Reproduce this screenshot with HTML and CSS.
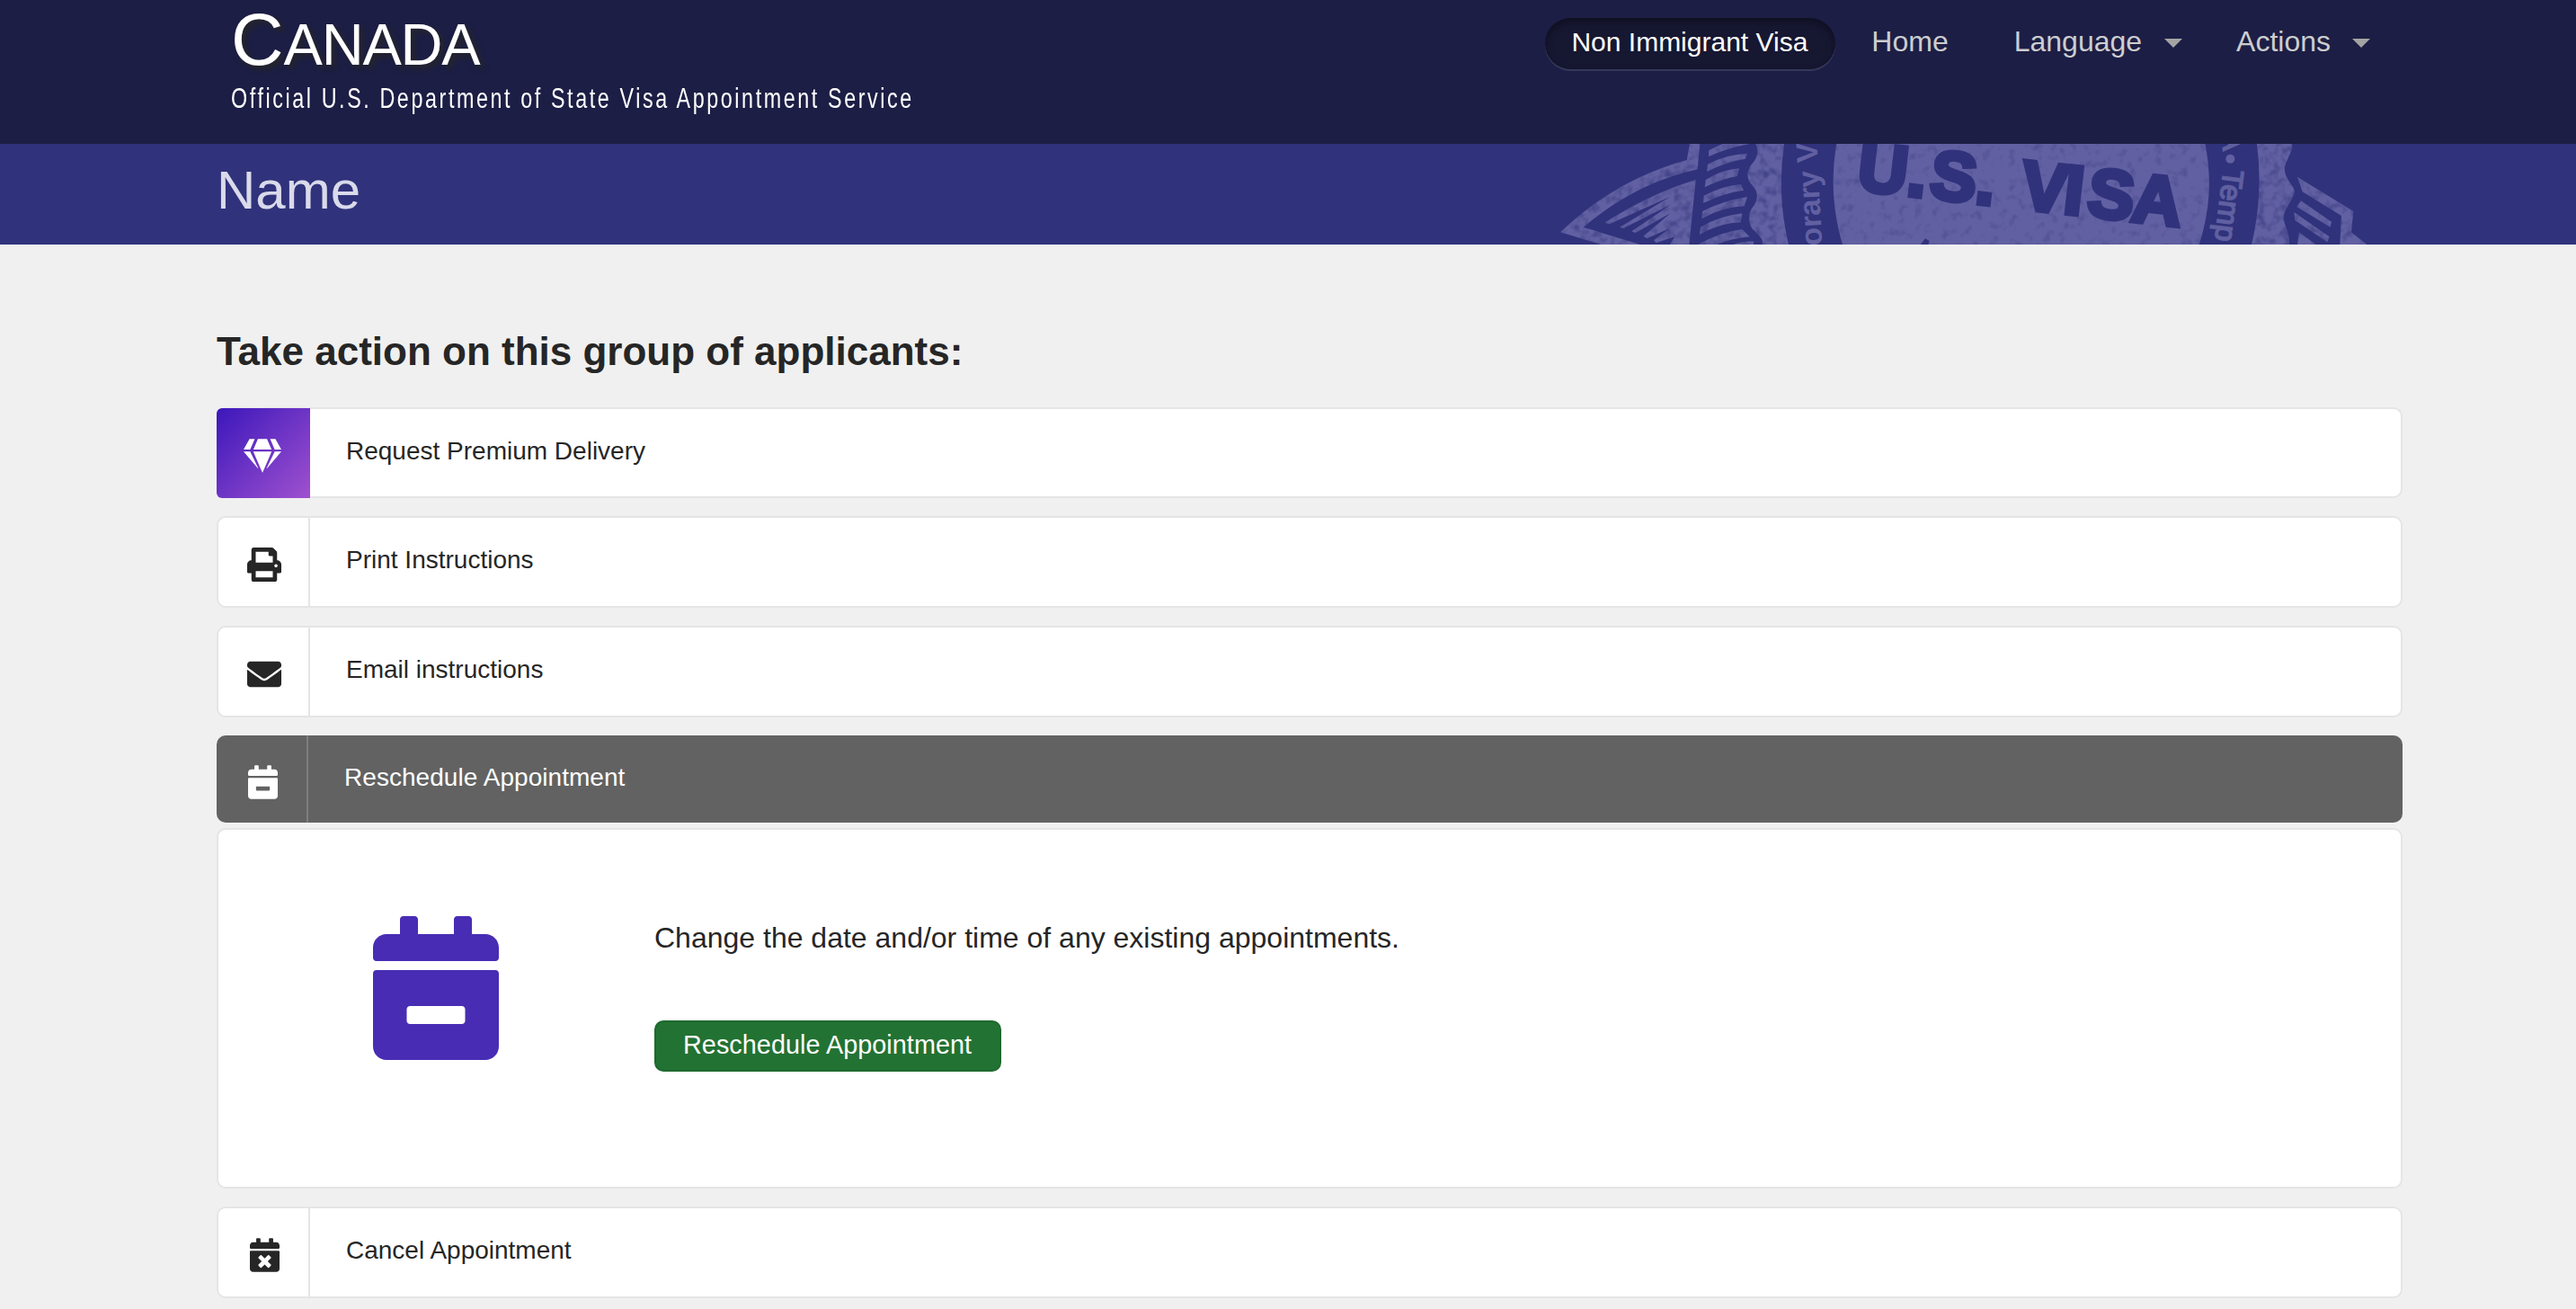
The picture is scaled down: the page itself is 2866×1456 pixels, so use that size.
FILE: index.html
```html
<!DOCTYPE html>
<html lang="en">
<head>
<meta charset="utf-8">
<title>Canada - Visa Appointment Service</title>
<link rel="stylesheet" href="styles.css">
</head>
<body>
<header class="topbar">
  <div class="brand">
    <div class="brand-name">C<span class="brand-small">ANADA</span></div>
    <div class="brand-tag">Official U.S. Department of State Visa Appointment Service</div>
  </div>
  <nav class="nav">
    <a class="nav-pill">Non Immigrant Visa</a>
    <a class="nav-link nav-home">Home</a>
    <a class="nav-link nav-menu nav-language">Language<span class="caret"></span></a>
    <a class="nav-link nav-menu nav-actions">Actions<span class="caret"></span></a>
  </nav>
</header>

<section class="band">
  <h1 class="band-title">Name</h1>
  <svg class="seal" viewBox="0 30 2820 336" preserveAspectRatio="none" aria-hidden="true">
    <defs>
      <filter id="grain" x="0" y="0" width="100%" height="100%" color-interpolation-filters="sRGB">
        <feTurbulence type="fractalNoise" baseFrequency="0.035" numOctaves="2" seed="4" result="n"/>
        <feColorMatrix in="n" type="matrix" values="0 0 0 0 0.188  0 0 0 0 0.196  0 0 0 0 0.482  1.5 0 0 0 -0.66" result="spots"/>
        <feComposite in="spots" in2="SourceGraphic" operator="in" result="s"/>
        <feMerge><feMergeNode in="SourceGraphic"/><feMergeNode in="s"/></feMerge>
      </filter>
      <filter id="soft-grain" x="0" y="0" width="100%" height="100%" color-interpolation-filters="sRGB">
        <feTurbulence type="fractalNoise" baseFrequency="0.035" numOctaves="2" seed="9" result="n"/>
        <feColorMatrix in="n" type="matrix" values="0 0 0 0 0.188  0 0 0 0 0.196  0 0 0 0 0.482  1 0 0 0 -0.54" result="spots"/>
        <feComposite in="spots" in2="SourceGraphic" operator="in" result="s"/>
        <feMerge><feMergeNode in="SourceGraphic"/><feMergeNode in="s"/></feMerge>
      </filter>
    </defs>
    <g class="seal-light" filter="url(#grain)">
      <path d="M48 325Q230 150 470 84L480 30H514L506 115Q300 160 125 308L315 366H185Z"/>
      <path d="M500 150Q350 195 196 293L212 298 415 206 246 308 258 312 418 232 286 322 298 327 415 262 325 338 338 345 412 313 360 352 368 360 430 340 414 366H478Z"/>
      <path d="M543 52Q570 38 590 30H680Q600 45 543 73Z"/>
      <path d="M540 98Q600 65 672 62L665 80Q600 90 537 123Z"/>
      <path d="M533 150Q590 115 645 112L638 138Q590 145 530 175Z"/>
      <path d="M527 203Q590 170 650 165L660 185Q600 192 525 228Z"/>
      <path d="M522 255Q590 220 672 207L662 238Q590 240 520 280Z"/>
      <path d="M516 308Q580 270 655 262L650 292Q580 295 513 332Z"/>
      <path d="M508 366Q580 325 655 315L680 340Q620 345 570 366Z"/>
      <path d="M625 366Q660 355 693 355V366Z"/>
      <path d="M700 30C715 60 700 85 685 100C665 130 672 150 690 170C710 190 707 215 695 235C672 260 675 295 690 315C712 335 727 350 722 366H810Q770 200 795 30Z"/>
      <path d="M2373 30Q2395 200 2355 366H2480C2485 330 2465 310 2462 275C2465 245 2495 215 2498 190C2500 170 2465 150 2465 110C2470 85 2495 50 2490 30Z"/>
      <path d="M2508 140L2695 255 2688 325 2740 366H2650L2655 270 2525 190Z"/>
      <path d="M2520 220L2622 290 2618 308 2506 240Z"/>
      <path d="M2497 258L2615 340 2608 358 2500 285Z"/>
      <path d="M2514 325L2570 366H2508Z"/>
    </g>
    <path class="seal-light" filter="url(#soft-grain)" d="M970 30Q940 200 990 366H2180Q2235 200 2200 30Z"/>
    <path class="seal-dark" d="M1250 366L1266 346 1280 354 1276 366Z"/>
    <text class="seal-dark seal-visa" transform="translate(1043 183) rotate(6.5)" x="-9 158 235 388 541 684 764 912">U.S.VISA</text>
    <text class="seal-light seal-ring" transform="translate(922 368) rotate(-93)">orary V</text>
    <text class="seal-light seal-ring seal-ring-end" transform="translate(2262 114) rotate(97)">Temp</text>
    <text class="seal-light seal-ring seal-ring-end" transform="translate(2258 -12) rotate(88)">A</text>
    <circle class="seal-light" cx="2284" cy="80" r="15"/>
  </svg>
</section>

<main class="content">
  <h2 class="heading">Take action on this group of applicants:</h2>

  <div class="row row-premium">
    <div class="row-icon"><svg class="icon icon-gem" viewBox="0 0 576 512"><path d="M485.5 0L576 160H474.9L405.7 0h79.8zm-128 0l69.2 160H149.3L218.5 0h139zm-267 0h79.8l-69.2 160H0L90.5 0zM0 192h100.7l123 251.7c1.5 3.1-2.7 5.9-5 3.3L0 192zm148.2 0h279.6l-137 318.2c-1 2.4-4.5 2.4-5.5 0L148.2 192zm204.1 251.7l123-251.7H576L357.3 446.9c-2.3 2.7-6.5-.1-5-3.2z"/></svg></div>
    <div class="row-label">Request Premium Delivery</div>
  </div>

  <div class="row">
    <div class="row-icon"><svg class="icon icon-square" viewBox="0 0 512 512"><path d="M448 192V77.25c0-8.49-3.37-16.62-9.37-22.63L393.37 9.37c-6-6-14.14-9.37-22.63-9.37H96C78.33 0 64 14.33 64 32v160c-35.35 0-64 28.65-64 64v112c0 8.84 7.16 16 16 16h48v96c0 17.67 14.33 32 32 32h320c17.67 0 32-14.33 32-32v-96h48c8.84 0 16-7.16 16-16V256c0-35.35-28.65-64-64-64zm-64 256H128v-96h256v96zm0-224H128V64h192v48c0 8.84 7.16 16 16 16h48v96zm48 72c-13.25 0-24-10.75-24-24 0-13.26 10.75-24 24-24s24 10.74 24 24c0 13.25-10.75 24-24 24z"/></svg></div>
    <div class="row-label">Print Instructions</div>
  </div>

  <div class="row">
    <div class="row-icon"><svg class="icon icon-square" viewBox="0 0 512 512"><path d="M502.3 190.8c3.9-3.1 9.7-.2 9.7 4.7V400c0 26.5-21.5 48-48 48H48c-26.5 0-48-21.5-48-48V195.6c0-5 5.7-7.8 9.7-4.7 22.4 17.4 52.1 39.5 154.1 113.6 21.1 15.4 56.7 47.8 92.2 47.6 35.7.3 72-32.8 92.3-47.6 102-74.1 131.6-96.3 154-113.7zM256 320c23.2.4 56.6-29.2 73.4-41.4 132.7-96.3 142.8-104.7 173.4-128.7 5.8-4.5 9.2-11.5 9.2-18.9v-19c0-26.5-21.5-48-48-48H48c-26.5 0-48 21.5-48 48v19c0 7.4 3.4 14.3 9.2 18.9 30.6 23.9 40.7 32.4 173.4 128.7 16.8 12.2 50.2 41.8 73.4 41.4z"/></svg></div>
    <div class="row-label">Email instructions</div>
  </div>

  <div class="row row-active">
    <div class="row-icon"><svg class="icon icon-calendar" viewBox="0 0 448 512"><path d="M436 160H12c-6.6 0-12-5.4-12-12v-36c0-26.5 21.5-48 48-48h48V12c0-6.6 5.4-12 12-12h40c6.6 0 12 5.4 12 12v52h128V12c0-6.6 5.4-12 12-12h40c6.6 0 12 5.4 12 12v52h48c26.5 0 48 21.5 48 48v36c0 6.6-5.4 12-12 12zM12 192h424c6.6 0 12 5.4 12 12v260c0 26.5-21.5 48-48 48H48c-26.5 0-48-21.5-48-48V204c0-6.6 5.4-12 12-12zm304 192c6.6 0 12-5.4 12-12v-40c0-6.6-5.4-12-12-12H132c-6.6 0-12 5.4-12 12v40c0 6.6 5.4 12 12 12h184z"/></svg></div>
    <div class="row-label">Reschedule Appointment</div>
  </div>

  <div class="panel">
    <div class="panel-icon"><svg class="icon icon-large" viewBox="0 0 448 512"><path d="M436 160H12c-6.6 0-12-5.4-12-12v-36c0-26.5 21.5-48 48-48h48V12c0-6.6 5.4-12 12-12h40c6.6 0 12 5.4 12 12v52h128V12c0-6.6 5.4-12 12-12h40c6.6 0 12 5.4 12 12v52h48c26.5 0 48 21.5 48 48v36c0 6.6-5.4 12-12 12zM12 192h424c6.6 0 12 5.4 12 12v260c0 26.5-21.5 48-48 48H48c-26.5 0-48-21.5-48-48V204c0-6.6 5.4-12 12-12zm304 192c6.6 0 12-5.4 12-12v-40c0-6.6-5.4-12-12-12H132c-6.6 0-12 5.4-12 12v40c0 6.6 5.4 12 12 12h184z"/></svg></div>
    <div class="panel-body">
      <p class="panel-text">Change the date and/or time of any existing appointments.</p>
      <a class="button">Reschedule Appointment</a>
    </div>
  </div>

  <div class="row">
    <div class="row-icon"><svg class="icon icon-calendar" viewBox="0 0 448 512"><path d="M436 160H12c-6.6 0-12-5.4-12-12v-36c0-26.5 21.5-48 48-48h48V12c0-6.6 5.4-12 12-12h40c6.6 0 12 5.4 12 12v52h128V12c0-6.6 5.4-12 12-12h40c6.6 0 12 5.4 12 12v52h48c26.5 0 48 21.5 48 48v36c0 6.6-5.4 12-12 12zM12 192h424c6.6 0 12 5.4 12 12v260c0 26.5-21.5 48-48 48H48c-26.5 0-48-21.5-48-48V204c0-6.6 5.4-12 12-12zm257.3 160l48.1-48.1c4.7-4.7 4.7-12.3 0-17l-28.3-28.3c-4.7-4.7-12.3-4.7-17 0L224 306.7l-48.1-48.1c-4.7-4.7-12.3-4.7-17 0l-28.3 28.3c-4.7 4.7-4.7 12.3 0 17l48.1 48.1-48.1 48.1c-4.7 4.7-4.7 12.3 0 17l28.3 28.3c4.7 4.7 12.3 4.7 17 0l48.1-48.1 48.1 48.1c4.7 4.7 12.3 4.7 17 0l28.3-28.3c4.7-4.7 4.7-12.3 0-17L269.3 352z"/></svg></div>
    <div class="row-label">Cancel Appointment</div>
  </div>
</main>
</body>
</html>
```
FILE: styles.css
```css
* { box-sizing: border-box; }

body {
  margin: 0;
  background: #f0f0f0;
  color: #262626;
  font-family: "Liberation Sans", Helvetica, Arial, sans-serif;
}

/* Header */
.topbar {
  display: flex;
  justify-content: space-between;
  align-items: flex-start;
  height: 160px;
  padding: 0 229px 0 257px;
  background: #1c1e45;
}
.brand-name {
  height: 88px;
  font-size: 81px;
  line-height: 88px;
  color: #fff;
  text-shadow: 4px 4px 6px #262626;
}
.brand-small { font-size: 65px; line-height: 1; letter-spacing: -1.2px; }
.brand-tag {
  margin-top: 4px;
  width: 760px;
  font-size: 31px;
  line-height: 36px;
  letter-spacing: 3.45px;
  white-space: nowrap;
  color: #fff;
  transform: scaleX(0.752);
  transform-origin: left;
}

.nav {
  display: flex;
  align-items: flex-start;
  padding-top: 20px;
  white-space: nowrap;
}
.nav-pill {
  height: 57px;
  padding: 0 31px 0 29px;
  border-radius: 29px;
  background: #161731;
  box-shadow: inset 0 4px 8px rgba(0, 0, 0, 0.35), 0 2px 0 rgba(255, 255, 255, 0.12);
  color: #fff;
  font-size: 30px;
  line-height: 54px;
}
.nav-link {
  color: #cdcdcf;
  font-size: 32px;
  line-height: 52px;
}
.nav-home { margin-left: 40px; }
.nav-menu { display: flex; align-items: center; }
.nav-language { margin-left: 73px; }
.nav-actions { margin-left: 60px; }
.caret {
  margin: 4px 0 0 25px;
  border: 10px solid transparent;
  border-top-color: #a4a4a4;
  border-bottom-width: 0;
}
.nav-actions .caret { margin-left: 24px; }

/* Group name band with the visa seal */
.band {
  display: flex;
  justify-content: space-between;
  height: 112px;
  padding: 0 206px 0 241px;
  background: #30327b;
  overflow: hidden;
}
.band-title {
  margin: 16px 0 0;
  font-size: 60px;
  font-weight: 400;
  line-height: 72px;
  color: #d9daea;
}
.seal { display: block; width: 940px; height: 112px; }
.seal-light { fill: #6160a2; }
.seal-dark { fill: #30327b; }
.seal-visa { font-size: 230px; font-weight: 700; stroke: #30327b; stroke-width: 16px; }
.seal-ring { font-size: 100px; font-weight: 700; }
.seal-ring-end { font-size: 98px; font-weight: 400; stroke: #5f5fa0; stroke-width: 5px; }

/* Actions list */
.content { padding: 93px 193px 12px 241px; }
.heading {
  margin: 0 0 36px;
  font-size: 44px;
  font-weight: 700;
  line-height: 52px;
}
.row {
  display: flex;
  height: 102px;
  margin-bottom: 20px;
  border: 2px solid #e5e5e5;
  border-radius: 10px;
  background: #fff;
}
.row-icon {
  display: flex;
  align-items: center;
  justify-content: center;
  width: 102px;
  padding: 6px 0 0 2px;
  border-right: 2px solid #e5e5e5;
}
.row-label {
  display: flex;
  align-items: center;
  padding: 0 0 4px 40px;
  font-size: 28px;
}
.icon { display: block; fill: currentColor; }
.icon-gem { width: 42px; height: 38px; }
.icon-square { width: 38px; height: 38px; }
.icon-calendar { width: 33px; height: 38px; }
.icon-large { width: 140px; height: 160px; }

.row-premium { height: 101px; }
.row-premium .row-icon {
  width: 104px;
  margin: -1px 0 -2px -2px;
  padding: 5px 2px 0 0;
  border-right: 0;
  border-radius: 6px 0 0 6px;
  background: linear-gradient(135deg, #3c17bb, #9f51cf);
  color: #fff;
}
.row-active {
  height: 97px;
  margin-bottom: 6px;
  border: 0;
  background: #626262;
  color: #fff;
}
.row-active .row-icon { border-right-color: #7e7e7e; }
.row-active .row-label { letter-spacing: 0.05px; }

.panel {
  display: flex;
  height: 401px;
  margin-bottom: 20px;
  padding: 96px 0 0 172px;
  border: 2px solid #e5e5e5;
  border-radius: 10px;
  background: #fff;
}
.panel-icon { width: 313px; color: #482db4; }
.panel-text {
  margin: 4px 0 72px;
  font-size: 32px;
  line-height: 40px;
}
.button {
  display: inline-block;
  height: 57px;
  padding: 0 31px 0 30px;
  border: 2px solid #1e692f;
  border-radius: 10px;
  background: #227233;
  color: #fff;
  font-size: 28.8px;
  line-height: 51px;
  letter-spacing: 0.04px;
}
```
